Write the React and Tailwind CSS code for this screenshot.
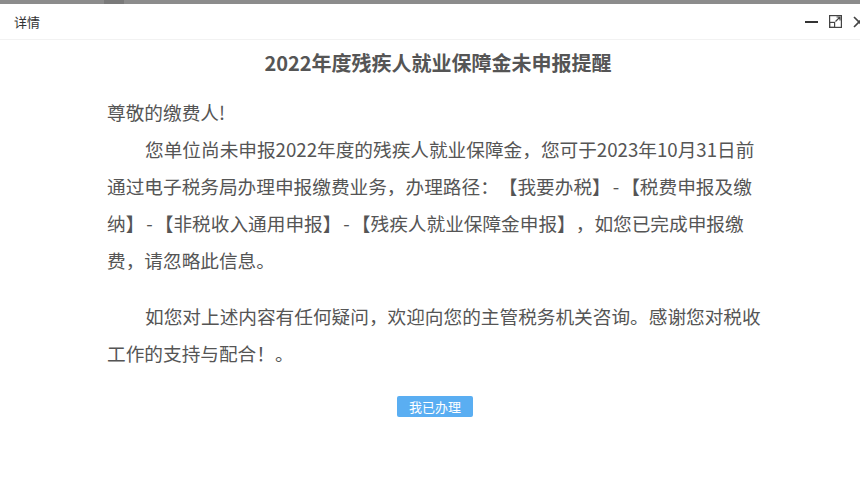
import React from 'react';

const font = { fontFamily: '"Noto Sans CJK SC", "Noto Sans", sans-serif' };

function MaxIcon() {
  return (
    <svg width="13" height="13" viewBox="0 0 13 13" fill="none" stroke="#444" strokeWidth="1.2">
      <rect x="0.6" y="0.6" width="11.8" height="11.8" />
      <rect x="0.6" y="7.4" width="5" height="5" />
      <path d="M6.5 6.5 L11 2 M7.5 2 H11 V5.5" />
    </svg>
  );
}

function CloseIcon() {
  return (
    <svg width="12" height="12" viewBox="0 0 12 12" stroke="#444" strokeWidth="1.6">
      <path d="M1 1 L11 11 M11 1 L1 11" />
    </svg>
  );
}

const Dash = () => <span className="mx-[2px]">-</span>;

export default function App() {
  return (
    <div className="w-[860px] h-[496px] bg-white overflow-hidden text-[#555]" style={font}>
      <div className="h-[4px] bg-[#8c8c8c] flex">
        <div className="ml-[104px] w-[20px] bg-[#7a7a7a]" />
      </div>
      <div className="h-[36px] flex items-center justify-between border-b border-[#f2f2f2] pl-[14px] overflow-hidden">
        <span className="text-[13px] text-[#333]">详情</span>
        <div className="flex items-center gap-[11px] mr-[-5px]">
          <div className="w-[13px] h-[2px] bg-[#333]" />
          <MaxIcon />
          <CloseIcon />
        </div>
      </div>
      <div className="w-[662px] ml-[107px]">
        <h1 className="text-[20px] font-bold text-center leading-[28px] mt-[9px] text-[#555]">
          2022年度残疾人就业保障金未申报提醒
        </h1>
        <div className="text-[18.67px] leading-[37px] mt-[16px] whitespace-nowrap [text-spacing-trim:space-all]">
          <p>尊敬的缴费人!</p>
          <p className="indent-[38px]">
            您单位尚未申报2022年度的残疾人就业保障金，您可于2023年10月31日前<br />
            通过电子税务局办理申报缴费业务，办理路径：【我要办税】<Dash />【税费申报及缴<br />
            纳】<Dash />【非税收入通用申报】<Dash />【残疾人就业保障金申报】，如您已完成申报缴<br />
            费，请忽略此信息。
          </p>
          <p className="indent-[38px] mt-[19px]">
            如您对上述内容有任何疑问，欢迎向您的主管税务机关咨询。感谢您对税收<br />
            工作的支持与配合！。
          </p>
        </div>
        <div className="flex justify-center mt-[25px] pr-[6px]">
          <button className="w-[76px] h-[21px] bg-[#5aaef2] text-white text-[13px] leading-none rounded-[2px]">
            我已办理
          </button>
        </div>
      </div>
    </div>
  );
}
